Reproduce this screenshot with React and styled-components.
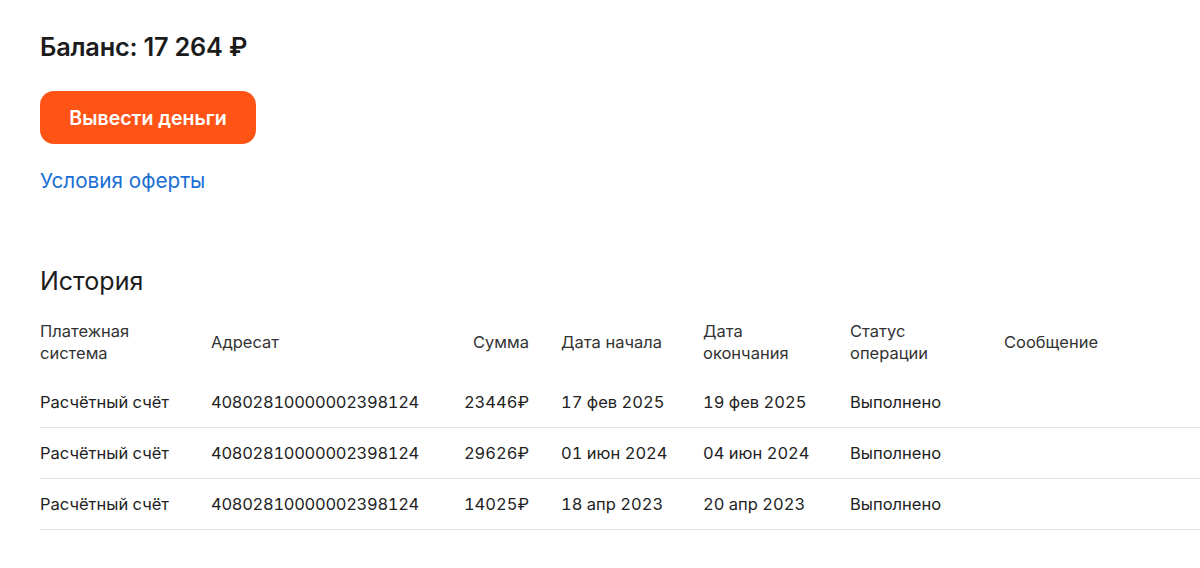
import React from 'react'
import styled, { createGlobalStyle } from 'styled-components'

const GlobalStyle = createGlobalStyle`
  body {
    margin: 0;
    background: #fff;
    font-family: Inter, "Noto Sans", sans-serif;
    color: #222;
  }
`;

const rows = [
  { system: 'Расчётный счёт', to: '40802810000002398124', sum: '23446₽', start: '17 фев 2025', end: '19 фев 2025', status: 'Выполнено' },
  { system: 'Расчётный счёт', to: '40802810000002398124', sum: '29626₽', start: '01 июн 2024', end: '04 июн 2024', status: 'Выполнено' },
  { system: 'Расчётный счёт', to: '40802810000002398124', sum: '14025₽', start: '18 апр 2023', end: '20 апр 2023', status: 'Выполнено' },
];

const App = () => {
  return (
    <Page>
      <GlobalStyle />
      <Balance>Баланс: 17 264 ₽</Balance>
      <WithdrawButton>Вывести деньги</WithdrawButton>
      <OfferLink href="#">Условия оферты</OfferLink>
      <HistoryTitle>История</HistoryTitle>
      <Table>
        <HeadRow>
          <Cell>Платежная<br />система</Cell>
          <Cell>Адресат</Cell>
          <Cell $right>Сумма</Cell>
          <Cell $indent>Дата начала</Cell>
          <Cell>Дата<br />окончания</Cell>
          <Cell>Статус<br />операции</Cell>
          <Cell>Сообщение</Cell>
        </HeadRow>
        {rows.map((r, i) => (
          <Row key={i}>
            <Cell>{r.system}</Cell>
            <Cell $tight>{r.to}</Cell>
            <Cell $right>{r.sum}</Cell>
            <Cell $indent>{r.start}</Cell>
            <Cell>{r.end}</Cell>
            <Cell>{r.status}</Cell>
            <Cell></Cell>
          </Row>
        ))}
      </Table>
    </Page>
  );
}

const Page = styled.main`
  padding: 31px 0 0 40px;
  display: flex;
  flex-direction: column;
  align-items: flex-start;
`;

const Balance = styled.h2`
  margin: 0;
  font-size: 25.3px;
  line-height: 32px;
  font-weight: 600;
  color: #1c1c1c;
  letter-spacing: -0.2px;
`;

const WithdrawButton = styled.button`
  margin-top: 28px;
  width: 216px;
  height: 53px;
  border: none;
  border-radius: 14px;
  background: #ff5416;
  color: #fff;
  font-family: Inter, "Noto Sans", sans-serif;
  font-size: 19.5px;
  font-weight: 600;
  cursor: pointer;
`;

const OfferLink = styled.a`
  margin-top: 24px;
  font-size: 20.7px;
  line-height: 26px;
  color: #1a6fd4;
  text-decoration: none;
`;

const HistoryTitle = styled.h3`
  margin: 71px 0 0;
  font-size: 25px;
  line-height: 32px;
  font-weight: 400;
  color: #1c1c1c;
`;

const Table = styled.div`
  margin-top: 23px;
  width: 1160px;
  display: flex;
  flex-direction: column;
`;

const cols = '171px 238px 80px 174px 147px 154px 1fr';

const HeadRow = styled.div`
  display: grid;
  grid-template-columns: ${cols};
  align-items: center;
  padding-bottom: 13px;
  font-size: 16.5px;
  line-height: 22px;
  color: #333;
`;

const Row = styled.div`
  display: grid;
  grid-template-columns: ${cols};
  align-items: center;
  height: 50px;
  border-bottom: 1px solid #e3e3e3;
  font-size: 16.5px;
  color: #222;
  font-variant-numeric: tabular-nums;
`;

const Cell = styled.div`
  text-align: ${({ $right }) => ($right ? 'right' : 'left')};
  padding-left: ${({ $indent }) => ($indent ? '32px' : '0')};
  letter-spacing: ${({ $tight }) => ($tight ? '-0.3px' : 'normal')};
  white-space: nowrap;
`;

export default App;
